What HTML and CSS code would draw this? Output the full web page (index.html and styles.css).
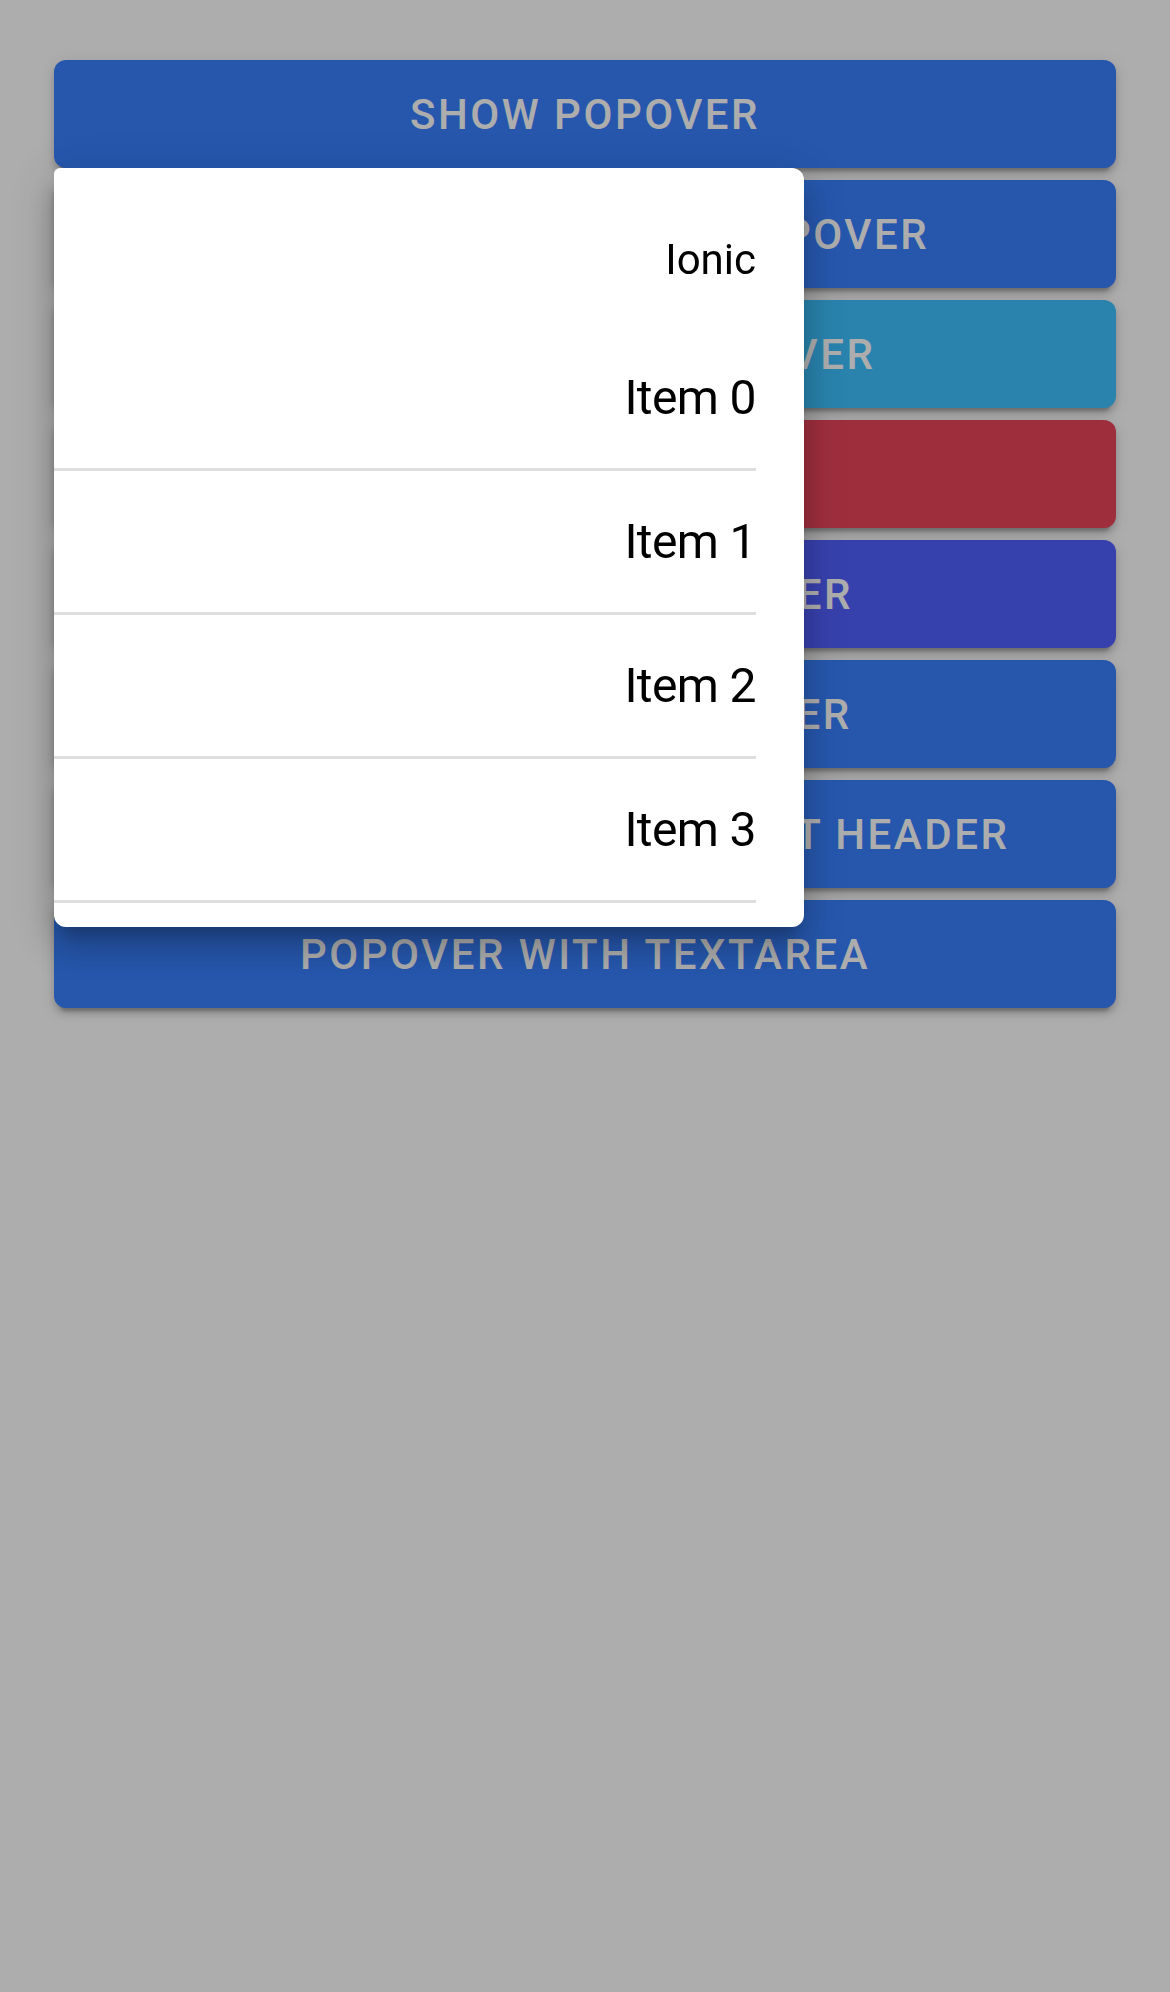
FILE: index.html
```
<!DOCTYPE html>
<html lang="en">
<head>
<meta charset="utf-8">
<title>Popover - Basic</title>
<link rel="stylesheet" href="styles.css">
</head>
<body>
<main class="content">
  <button class="btn btn-primary">Show Popover</button>
  <button class="btn btn-primary">Show Tall Content Popover</button>
  <button class="btn btn-secondary">Show No Event Popover</button>
  <button class="btn btn-danger">Custom Class</button>
  <button class="btn btn-tertiary">Translucent Popover</button>
  <button class="btn btn-primary">No Backdrop Popover</button>
  <button class="btn btn-primary">Popover With Translucent Header</button>
  <button class="btn btn-primary">Popover With Textarea</button>
</main>
<div class="backdrop"></div>
<div class="popover">
  <div class="list">
    <div class="list-header">Ionic</div>
    <div class="item">Item 0</div>
    <div class="item">Item 1</div>
    <div class="item">Item 2</div>
    <div class="item">Item 3</div>
  </div>
</div>
</body>
</html>
```
FILE: styles.css
```
html, body {
  margin: 0;
  padding: 0;
}
body {
  width: 1170px;
  height: 1992px;
  background: #ffffff;
  font-family: Roboto, "Liberation Sans", sans-serif;
  overflow: hidden;
}
.content {
  display: flex;
  flex-direction: column;
  gap: 12px;
  padding: 60px 54px 0 54px;
}
.btn {
  height: 108px;
  border: 0;
  border-radius: 12px;
  font-family: Roboto, "Liberation Sans", sans-serif;
  font-size: 42px;
  font-weight: 500;
  letter-spacing: 2.52px;
  text-transform: uppercase;
  color: #ffffff;
  box-shadow: 0 9px 3px -6px rgba(0,0,0,0.2), 0 6px 6px 0 rgba(0,0,0,0.14), 0 3px 15px 0 rgba(0,0,0,0.12);
  padding: 0 24px;
  text-align: center;
}
.btn-primary { background: #3880ff; }
.btn-secondary { background: #3dc2ff; }
.btn-danger { background: #eb445a; }
.btn-tertiary { background: #5260ff; }
.backdrop {
  position: fixed;
  inset: 0;
  background: rgba(0,0,0,0.32);
}
.popover {
  position: absolute;
  left: 54px;
  top: 168px;
  width: 750px;
  background: #ffffff;
  border-radius: 6px 12px 12px 12px;
  box-shadow: 0 15px 15px -9px rgba(0,0,0,0.2), 0 24px 30px 3px rgba(0,0,0,0.14), 0 9px 42px 6px rgba(0,0,0,0.12);
  color: #000000;
}
.list {
  padding: 24px 0;
}
.list-header {
  height: 135px;
  display: flex;
  align-items: center;
  justify-content: flex-end;
  padding-right: 48px;
  font-size: 42px;
}
.item {
  height: 141px;
  margin-right: 48px;
  border-bottom: 3px solid #dedede;
  display: flex;
  align-items: center;
  justify-content: flex-end;
  font-size: 48px;
  letter-spacing: -0.6px;
}
```
